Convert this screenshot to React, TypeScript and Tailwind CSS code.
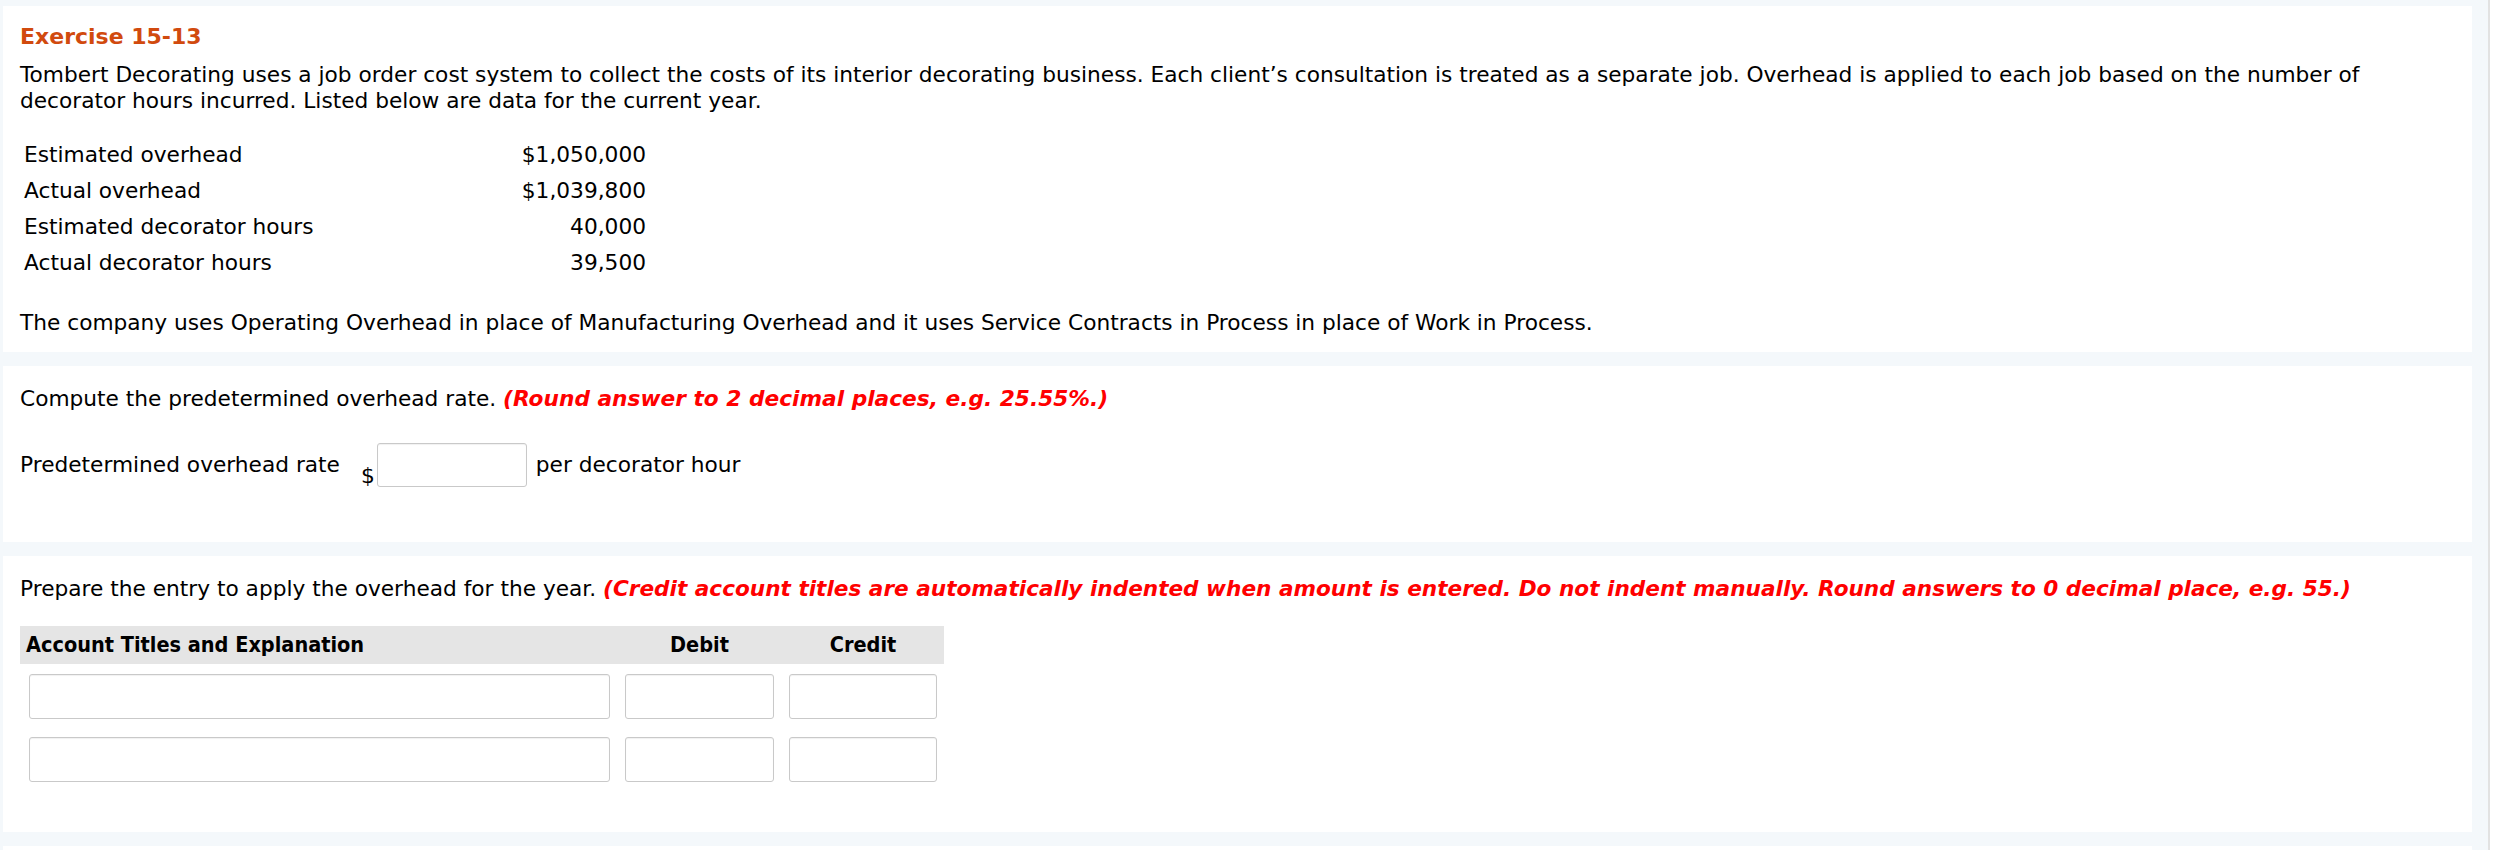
import React from 'react'

const rows = [
  ['Estimated overhead', '$1,050,000'],
  ['Actual overhead', '$1,039,800'],
  ['Estimated decorator hours', '40,000'],
  ['Actual decorator hours', '39,500'],
]

function Field({ className = '' }: { className?: string }) {
  return (
    <input
      type="text"
      className={`h-[45px] bg-white border border-[#c9c9c9] rounded-[3px] shadow-[inset_0_1px_1px_rgba(0,0,0,0.06)] outline-none ${className}`}
    />
  )
}

export default function App() {
  return (
    <div className="flex w-[2494px] h-[850px] overflow-hidden bg-white text-black font-['DejaVu_Sans',Verdana,sans-serif] text-[21.7px] leading-[26px]">
      <div className="w-[2488px] shrink-0 bg-[#f4f8fb] pt-[6px] pl-[3px] flex flex-col gap-[14px]">
        {/* Problem statement */}
        <section className="shrink-0 w-[2469px] bg-white pt-[18px] pb-[16px] pl-[17px] pr-[40px]">
          <h1 className="text-[#d14a0e] font-bold text-[22px]">Exercise 15-13</h1>
          <p className="mt-[12px]">
            Tombert Decorating uses a job order cost system to collect the costs of its interior decorating business. Each client’s consultation is treated as a separate job. Overhead is applied to each job based on the number of decorator hours incurred. Listed below are data for the current year.
          </p>
          <div className="mt-[23px] w-[630px]">
            {rows.map(([label, value]) => (
              <div key={label} className="flex justify-between px-[4px] py-[5px]">
                <span>{label}</span>
                <span>{value}</span>
              </div>
            ))}
          </div>
          <p className="mt-[29px]">
            The company uses Operating Overhead in place of Manufacturing Overhead and it uses Service Contracts in Process in place of Work in Process.
          </p>
        </section>

        {/* Part 1 */}
        <section className="shrink-0 w-[2469px] h-[176px] bg-white pt-[20px] pl-[17px]">
          <p>
            Compute the predetermined overhead rate.{' '}
            <span className="text-[#ff0000] font-bold italic">(Round answer to 2 decimal places, e.g. 25.55%.)</span>
          </p>
          <div className="mt-[31px] flex items-center h-[44px]">
            <span>Predetermined overhead rate</span>
            <span className="self-end ml-[21px] mr-[2px] leading-[22px]">$</span>
            <Field className="w-[150px] !h-[44px]" />
            <span className="ml-[9px]">per decorator hour</span>
          </div>
        </section>

        {/* Part 2 */}
        <section className="shrink-0 w-[2469px] h-[276px] bg-white pt-[20px] pl-[17px]">
          <p>
            Prepare the entry to apply the overhead for the year.{' '}
            <span className="text-[#ff0000] font-bold italic text-[21.6px]">
              (Credit account titles are automatically indented when amount is entered. Do not indent manually. Round answers to 0 decimal place, e.g. 55.)
            </span>
          </p>
          <div className="mt-[24px] w-[924px]">
            <div className="grid grid-cols-[597px_165px_162px] h-[38px] items-center bg-[#e5e5e5] font-bold font-['DejaVu_Sans_Condensed','DejaVu_Sans',sans-serif] [font-stretch:condensed] text-[21.5px]">
              <span className="pl-[6px]">Account Titles and Explanation</span>
              <span className="text-center">Debit</span>
              <span className="text-center">Credit</span>
            </div>
            <div className="mt-[10px] flex flex-col gap-[18px]">
              {[0, 1].map((i) => (
                <div key={i} className="grid grid-cols-[597px_165px_162px]">
                  <Field className="ml-[9px] w-[581px]" />
                  <Field className="ml-[8px] w-[149px]" />
                  <Field className="ml-[7px] w-[148px]" />
                </div>
              ))}
            </div>
          </div>
        </section>

        <div className="shrink-0 w-[2469px] h-[20px] bg-white" />
      </div>
      <div className="w-[2px] shrink-0 bg-[#e2e2e2]" />
      <div className="flex-1 bg-white" />
    </div>
  )
}
